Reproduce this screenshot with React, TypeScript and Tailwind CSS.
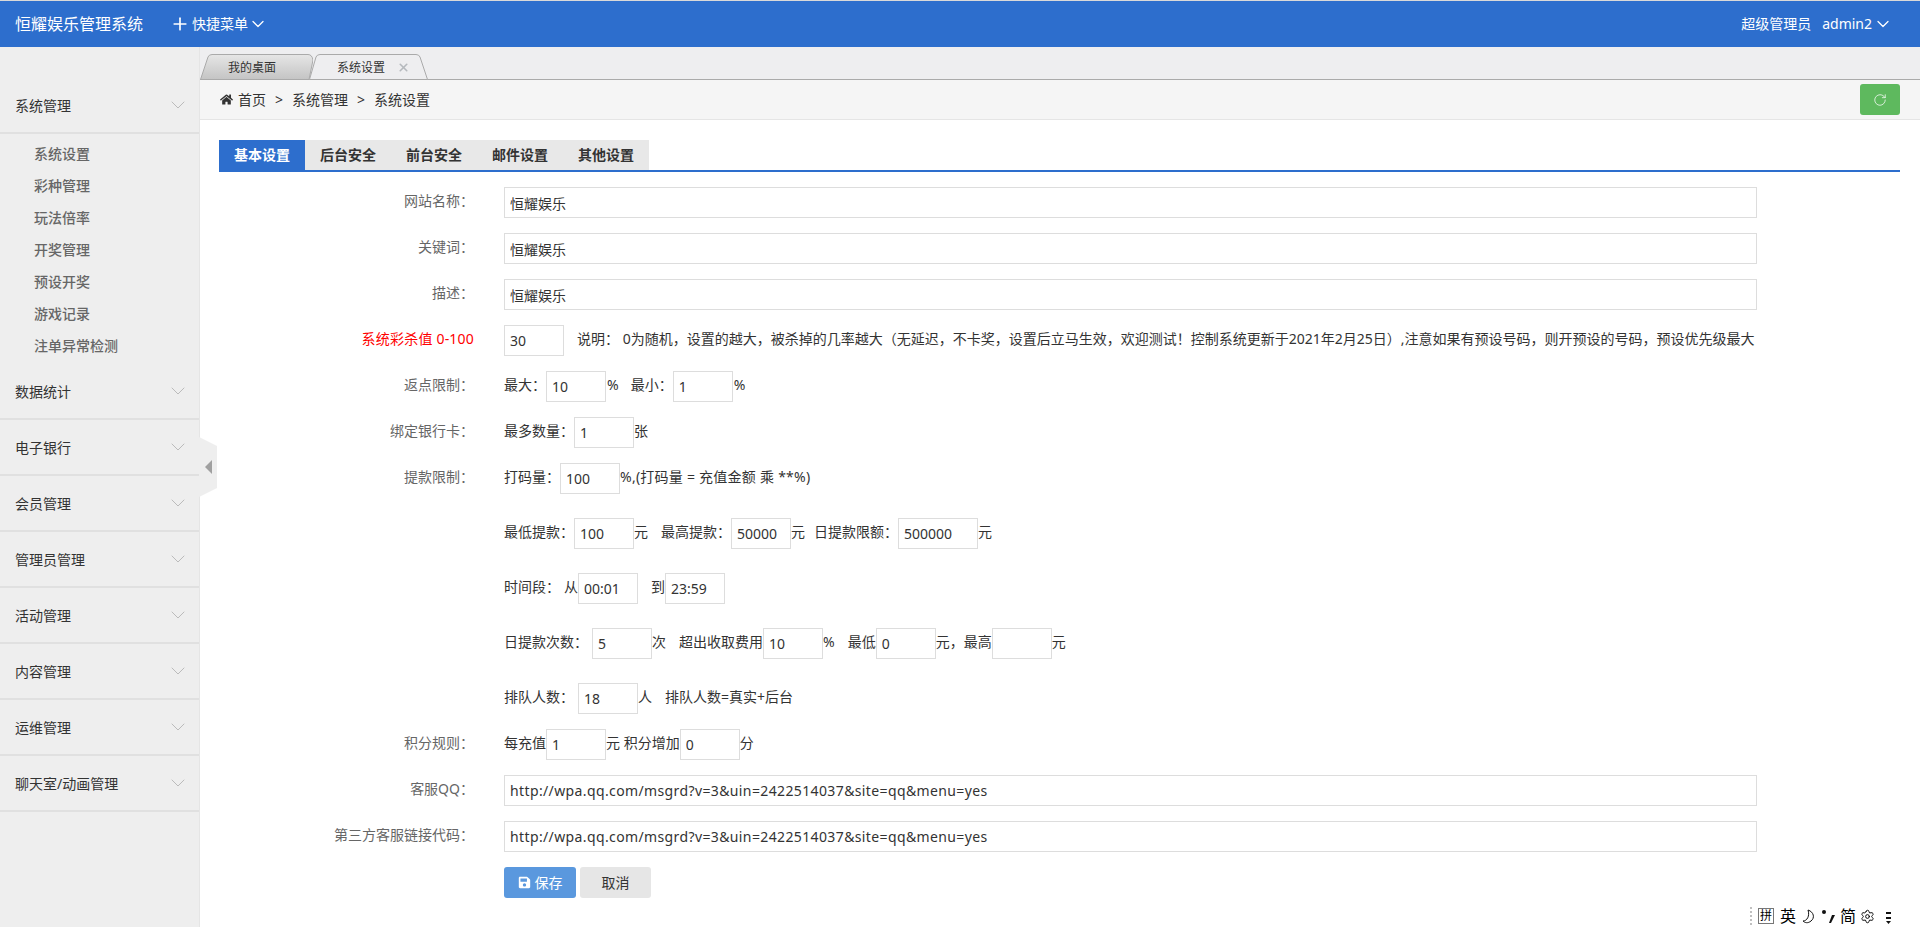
import type { ReactNode } from "react";
import { ChevronDown, Plus, RotateCw, Settings, X } from "lucide-react";
import { FaHome, FaSave } from "react-icons/fa";

const menus = ["数据统计", "电子银行", "会员管理", "管理员管理", "活动管理", "内容管理", "运维管理", "聊天室/动画管理"];
const subMenus = ["系统设置", "彩种管理", "玩法倍率", "开奖管理", "预设开奖", "游戏记录", "注单异常检测"];
const tabs = ["基本设置", "后台安全", "前台安全", "邮件设置", "其他设置"];
const qqUrl = "http://wpa.qq.com/msgrd?v=3&uin=2422514037&site=qq&menu=yes";

function MenuRow({ title }: { title: string }) {
  return (
    <div className="flex h-[56px] items-center justify-between border-b-2 border-[#e0e0e0] pl-[15px] pr-[9px] text-sm text-[#333]">
      <span className="pt-[2px]">{title}</span>
      <ChevronDown size={24} strokeWidth={1} className="text-[#bbb]" />
    </div>
  );
}

function Sidebar() {
  return (
    <aside className="relative w-[200px] shrink-0 border-r border-[#e5e5e5] bg-[#eeeeee] pt-[31px]">
      <MenuRow title="系统管理" />
      <ul className="pt-[4px] pb-[2px]">
        {subMenus.map((item) => (
          <li key={item} className="flex h-[32px] items-center pl-[34px] text-sm font-medium text-[#666]">
            {item}
          </li>
        ))}
      </ul>
      {menus.map((item) => (
        <MenuRow key={item} title={item} />
      ))}
      <svg className="absolute top-[390px] left-[199px] z-10" width="18" height="60" viewBox="0 0 18 60">
        <path d="M0 0 L18 9 V51 L0 60 Z" fill="#eeeeee" />
        <path d="M13 23 V37 L6 30 Z" fill="#a0a0a0" />
      </svg>
    </aside>
  );
}

function TabShape({ active }: { active: boolean }) {
  if (active) {
    return (
      <svg className="absolute inset-0" width="119" height="26" viewBox="0 0 119 26">
        <path d="M0.5 25.5 L7 3 Q8 0.5 11 0.5 H107 Q110 0.5 111 3 L118.5 25.5 Z" fill="#eeeef0" stroke="#aaaaaa" />
      </svg>
    );
  }
  return (
    <svg className="absolute inset-0" width="113" height="26" viewBox="0 0 113 26">
      <defs>
        <linearGradient id="tabFill" x1="0" y1="0" x2="0" y2="1">
          <stop offset="0" stopColor="#e6e6e6" />
          <stop offset="1" stopColor="#c4c4c4" />
        </linearGradient>
      </defs>
      <path d="M0.5 25.5 L8 3 Q9 0.5 12 0.5 H108 Q112 0.5 113 6 L109 25.5 Z" fill="url(#tabFill)" stroke="#aaaaaa" />
    </svg>
  );
}

function TabBar() {
  return (
    <div className="flex h-[33px] items-end border-b border-[#aaaaaa] bg-[#eeeef0]">
      <div className="relative -mb-px h-[26px] w-[113px] text-xs text-[#333]">
        <TabShape active={false} />
        <span className="absolute top-[6px] left-[28px] leading-[16px]">我的桌面</span>
      </div>
      <div className="relative -mb-px -ml-[4px] h-[26px] w-[119px] text-xs text-[#333]">
        <TabShape active />
        <span className="absolute top-[6px] left-[28px] leading-[16px]">系统设置</span>
        <X size={13} strokeWidth={3} className="absolute top-[7px] left-[88px] text-[#b5b9bd]" />
      </div>
    </div>
  );
}

function Breadcrumb() {
  return (
    <div className="flex h-[40px] items-center justify-between border-b border-[#e5e5e5] bg-[#f5f5f5] pl-[20px] pr-[20px] text-sm text-[#333]">
      <div className="flex items-center">
        <FaHome size={13} className="mr-[5px] text-[#333]" />
        <span>首页</span>
        <span className="mx-[9px]">&gt;</span>
        <span>系统管理</span>
        <span className="mx-[9px]">&gt;</span>
        <span>系统设置</span>
      </div>
      <button className="flex h-[31px] w-[40px] items-center justify-center rounded-[3px] bg-[#5eb95e] text-white">
        <RotateCw size={14} strokeWidth={1.25} />
      </button>
    </div>
  );
}

function Box({ value = "", wide = false, className = "" }: { value?: string; wide?: boolean; className?: string }) {
  return (
    <input
      readOnly
      value={value}
      className={`h-[31px] shrink-0 border border-[#dddddd] bg-white px-[5px] text-sm text-[#333] outline-none ${
        wide ? "w-[80px]" : "w-[60px]"
      } ${className}`}
    />
  );
}

function WideBox({ value, url = false }: { value: string; url?: boolean }) {
  return (
    <input
      readOnly
      value={value}
      className={`h-[31px] w-full border border-[#dddddd] px-[5px] text-sm text-[#333] outline-none ${url ? "tracking-[0.38px]" : ""}`}
    />
  );
}

// inline text sits a little above the middle of the inputs next to it
function T({ className = "", children }: { className?: string; children: ReactNode }) {
  return <span className={`pb-[4px] ${className}`}>{children}</span>;
}

function Row({ label, red = false, tall = false, children }: { label?: string; red?: boolean; tall?: boolean; children: ReactNode }) {
  return (
    <div className={`flex h-[31px] items-center ${tall ? "mb-[24px]" : "mb-[15px]"}`}>
      <label className={`w-[255px] shrink-0 pb-[3px] text-right text-sm ${red ? "tracking-[0.2px] text-[#ff0000]" : "text-[#666]"}`}>{label}</label>
      <div className="ml-[30px] flex min-w-0 flex-1 items-center whitespace-pre pr-[143px] text-sm text-[#333]">{children}</div>
    </div>
  );
}

function SettingsForm() {
  return (
    <div className="flex-1 bg-white pt-[20px] pl-[19px] pr-[20px]">
      <div className="mb-[15px] flex h-[32px] border-b-2 border-[#2d6ecd]">
        {tabs.map((t, i) => (
          <div
            key={t}
            className={`flex h-[30px] w-[86px] items-center justify-center text-sm font-bold ${
              i === 0 ? "bg-[#2d6ecd] text-white" : "bg-[#e8e8e8] text-[#333]"
            }`}
          >
            {t}
          </div>
        ))}
      </div>

      <Row label={"网站名称\uFF1A"}>
        <WideBox value="恒耀娱乐" />
      </Row>
      <Row label={"关键词\uFF1A"}>
        <WideBox value="恒耀娱乐" />
      </Row>
      <Row label={"描述\uFF1A"}>
        <WideBox value="恒耀娱乐" />
      </Row>
      <Row label="系统彩杀值 0-100" red>
        <Box value="30" />
        <T className="ml-[13px]">
          {"说明\uFF1A 0为随机\uFF0C设置的越大\uFF0C被杀掉的几率越大\uFF08无延迟\uFF0C不卡奖\uFF0C设置后立马生效\uFF0C欢迎测试\uFF01控制系统更新于2021年2月25日\uFF09,注意如果有预设号码\uFF0C则开预设的号码\uFF0C预设优先级最大"}
        </T>
      </Row>
      <Row label={"返点限制\uFF1A"}>
        <T>{"最大\uFF1A"}</T>
        <Box value="10" />
        <T className="ml-px">%</T>
        <T className="ml-[12px]">{"最小\uFF1A"}</T>
        <Box value="1" />
        <T className="ml-px">%</T>
      </Row>
      <Row label={"绑定银行卡\uFF1A"}>
        <T>{"最多数量\uFF1A"}</T>
        <Box value="1" />
        <T>张</T>
      </Row>
      <Row label={"提款限制\uFF1A"} tall>
        <T>{"打码量\uFF1A"}</T>
        <Box value="100" />
        <T className="tracking-[0.25px]">%,(打码量 = 充值金额 乘 **%)</T>
      </Row>
      <Row tall>
        <T>{"最低提款\uFF1A"}</T>
        <Box value="100" />
        <T>元</T>
        <T className="ml-[13px]">{"最高提款\uFF1A"}</T>
        <Box value="50000" />
        <T>元</T>
        <T className="ml-[9px]">{"日提款限额\uFF1A"}</T>
        <Box value="500000" wide />
        <T>元</T>
      </Row>
      <Row tall>
        <T>{"时间段\uFF1A"}</T>
        <T className="ml-[4px]">从</T>
        <Box value="00:01" />
        <T className="ml-[13px]">到</T>
        <Box value="23:59" />
      </Row>
      <Row tall>
        <T>{"日提款次数\uFF1A"}</T>
        <Box value="5" className="ml-[4px]" />
        <T>次</T>
        <T className="ml-[13px]">超出收取费用</T>
        <Box value="10" />
        <T>%</T>
        <T className="ml-[13px]">最低</T>
        <Box value="0" />
        <T>{"元\uFF0C最高"}</T>
        <Box />
        <T>元</T>
      </Row>
      <Row>
        <T>{"排队人数\uFF1A"}</T>
        <Box value="18" className="ml-[4px]" />
        <T>人</T>
        <T className="ml-[13px]">排队人数=真实+后台</T>
      </Row>
      <Row label={"积分规则\uFF1A"}>
        <T>每充值</T>
        <Box value="1" />
        <T>元 积分增加</T>
        <Box value="0" />
        <T>分</T>
      </Row>
      <Row label={"客服QQ\uFF1A"}>
        <WideBox value={qqUrl} url />
      </Row>
      <Row label={"第三方客服链接代码\uFF1A"}>
        <WideBox value={qqUrl} url />
      </Row>
      <Row>
        <button className="flex h-[31px] w-[72px] items-center justify-center gap-[4px] rounded-[3px] bg-[#5a98de] text-sm text-white">
          <FaSave size={13} />
          保存
        </button>
        <button className="ml-[4px] h-[31px] w-[71px] rounded-[3px] bg-[#e6e6e6] text-sm text-[#333]">取消</button>
      </Row>
    </div>
  );
}

function ImeBar() {
  return (
    <div className="absolute right-[28px] bottom-[2px] flex h-[18px] items-center bg-white text-[16px] leading-none text-black">
      <span className="mr-[6px] h-[18px] w-[2px] border-l-2 border-dotted border-[#c0c0c0]" />
      <span className="mr-[6px] flex h-[16px] w-[16px] items-center justify-center border border-[#777] text-[12px]">拼</span>
      <span className="mr-[6px]">英</span>
      <svg className="mr-[6px]" width="13" height="15" viewBox="0 0 13 15" fill="none" stroke="#111" strokeWidth="1">
        <path d="M6 1 C12 3 13 9 9 12 C6 14.5 3 14 1 12 C5 12 8 7 6 1 Z" />
      </svg>
      <svg className="mr-[5px]" width="14" height="15" viewBox="0 0 14 15">
        <circle cx="3" cy="3" r="2" fill="#111" />
        <path d="M11 6 H14 L10 14 H8 Z" fill="#111" />
      </svg>
      <span className="mr-[4px]">简</span>
      <Settings size={15} strokeWidth={1.5} className="mr-[10px]" />
      <svg width="7" height="15" viewBox="0 0 7 15">
        <rect x="1" y="3" width="5" height="2" fill="#111" />
        <rect x="1" y="8" width="5" height="2" fill="#111" />
        <path d="M1 12 H6 L3.5 15 Z" fill="#111" />
      </svg>
    </div>
  );
}

export default function App() {
  return (
    <div className="relative flex h-[927px] flex-col overflow-hidden bg-white font-['Noto_Sans','Noto_Sans_CJK_SC',sans-serif]">
      <header className="flex h-[47px] shrink-0 items-center justify-between border-t border-[#d9d9d9] bg-[#2d6ecd] pl-[15px] pr-[27px] text-white">
        <div className="flex items-center">
          <span className="text-base">恒耀娱乐管理系统</span>
          <Plus size={20} strokeWidth={2} className="ml-[27px]" />
          <span className="ml-[2px] text-sm">快捷菜单</span>
          <ChevronDown size={20} strokeWidth={1.5} />
        </div>
        <div className="flex items-center text-sm">
          <span>超级管理员</span>
          <span className="ml-[11px]">admin2</span>
          <ChevronDown size={20} strokeWidth={1.5} className="ml-px" />
        </div>
      </header>
      <div className="flex min-h-0 flex-1">
        <Sidebar />
        <main className="flex min-w-0 flex-1 flex-col">
          <TabBar />
          <Breadcrumb />
          <SettingsForm />
        </main>
      </div>
      <ImeBar />
    </div>
  );
}
